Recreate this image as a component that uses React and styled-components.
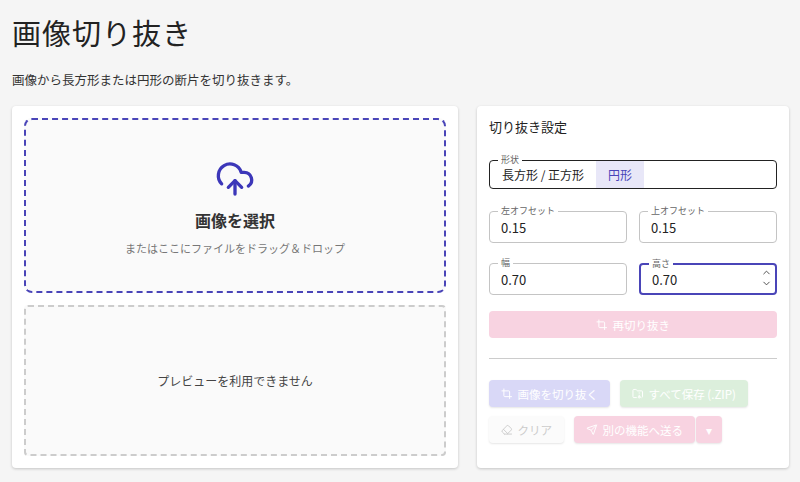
import React from "react";
import styled, { createGlobalStyle } from "styled-components";
import { LuCloudUpload, LuCrop, LuFolderArchive, LuSend, LuEraser, LuChevronUp, LuChevronDown } from "react-icons/lu";

const G = createGlobalStyle`
  html,body{margin:0;background:#f5f5f5;font-family:"Noto Sans CJK JP","Noto Sans",sans-serif;color:#222;}
  *{box-sizing:border-box;}
`;
const Page = styled.div`padding:12px 12px 0 12px;height:482px;overflow:hidden;`;
const Title = styled.h1`margin:0;font-size:29px;font-weight:400;line-height:40px;letter-spacing:1px;`;
const Sub = styled.p`margin:18px 0 16px;font-size:12.5px;line-height:20px;color:#333;`;
const Cols = styled.div`display:grid;grid-template-columns:446px 312px;gap:19px;`;
const Card = styled.div`background:#fff;border-radius:4px;box-shadow:0 1px 3px rgba(0,0,0,.2);height:362px;padding:12px;display:flex;flex-direction:column;gap:12px;`;
const Drop = styled.div`height:175px;border:2px dashed ${p=>p.$c};border-radius:${p=>p.$r}px;background:#fafafa;display:flex;flex-direction:column;align-items:center;justify-content:center;`;
const Up = styled.div`color:#3c37b9;font-size:40px;line-height:1;margin-top:4px;`;
const DropT = styled.div`font-size:16px;font-weight:700;color:#333;margin-top:6px;`;
const DropS = styled.div`font-size:11px;color:#777;margin-top:8px;`;
const Prev = styled.div`font-size:12px;color:#444;`;
const RCard = styled(Card)`padding:12px 12px;gap:0;`;
const RT = styled.div`font-size:13px;line-height:16px;margin:1px 0 25px;`;
const FS = styled.div`position:relative;border:1px solid ${p=>p.$c||"#c4c4c4"};border-width:${p=>p.$w||1}px;border-radius:4px;height:${p=>p.$h}px;display:flex;align-items:center;`;
const Leg = styled.span`position:absolute;top:-7px;left:8px;background:#fff;padding:0 3px;font-size:9px;line-height:12px;color:#666;`;
const Toggle = styled.span`height:100%;display:flex;align-items:center;padding:0 12px;font-size:12px;color:${p=>p.$on?"#4a45b8":"#222"};background:${p=>p.$on?"#e8e7f8":"transparent"};`;
const Row = styled.div`display:grid;grid-template-columns:1fr 1fr;gap:12px;margin-top:${p=>p.$m}px;`;
const Val = styled.span`padding-left:11px;font-size:13px;`;
const Spin = styled.span`position:absolute;right:3px;top:2px;font-size:11px;line-height:12px;color:#444;display:flex;flex-direction:column;`;
const Btn = styled.div`height:27px;border-radius:4px;display:flex;align-items:center;justify-content:center;gap:5px;font-size:11.5px;color:#fff;background:${p=>p.$bg};padding:0 12px;${p=>p.$full?"width:100%;":""}box-shadow:${p=>p.$flat?"none":"0 1px 2px rgba(0,0,0,.1)"};`;
const Hr = styled.div`height:1px;background:#ccc;margin:20px 0 21px;`;
const BRow = styled.div`display:flex;gap:10px;margin-bottom:9px;`;
const Split = styled.div`display:flex;gap:1px;`;

export default function App(){
  return <Page><G/>
    <Title>画像切り抜き</Title>
    <Sub>画像から長方形または円形の断片を切り抜きます。</Sub>
    <Cols>
      <Card>
        <Drop $c="#4a45b8" $r={8}>
          <Up><LuCloudUpload/></Up>
          <DropT>画像を選択</DropT>
          <DropS>またはここにファイルをドラッグ＆ドロップ</DropS>
        </Drop>
        <Drop $c="#ccc" $r={4} style={{height:151}}><Prev>プレビューを利用できません</Prev></Drop>
      </Card>
      <RCard>
        <RT>切り抜き設定</RT>
        <FS $c="#222" $h={29}><Leg>形状</Leg><Toggle>長方形 / 正方形</Toggle><Toggle $on>円形</Toggle></FS>
        <Row $m={22}>
          <FS $h={32}><Leg>左オフセット</Leg><Val>0.15</Val></FS>
          <FS $h={32}><Leg>上オフセット</Leg><Val>0.15</Val></FS>
        </Row>
        <Row $m={20}>
          <FS $h={32}><Leg>幅</Leg><Val>0.70</Val></FS>
          <FS $h={32} $c="#4a45b8" $w={2}><Leg>高さ</Leg><Val>0.70</Val><Spin><LuChevronUp/><LuChevronDown/></Spin></FS>
        </Row>
        <Btn $full $bg="#f8d3e1" $flat style={{marginTop:16}}><LuCrop/>再切り抜き</Btn>
        <Hr/>
        <BRow>
          <Btn $bg="#d9d8f7"><LuCrop/>画像を切り抜く</Btn>
          <Btn $bg="#dcefdc"><LuFolderArchive/>すべて保存 (.ZIP)</Btn>
        </BRow>
        <BRow>
          <Btn $bg="#fbfbfb" style={{color:"#ccc"}}><LuEraser/>クリア</Btn>
          <Split><Btn $bg="#f8d3e1"><LuSend/>別の機能へ送る</Btn><Btn $bg="#f8d3e1" style={{padding:"0 10px"}}>▾</Btn></Split>
        </BRow>
      </RCard>
    </Cols>
  </Page>;
}
